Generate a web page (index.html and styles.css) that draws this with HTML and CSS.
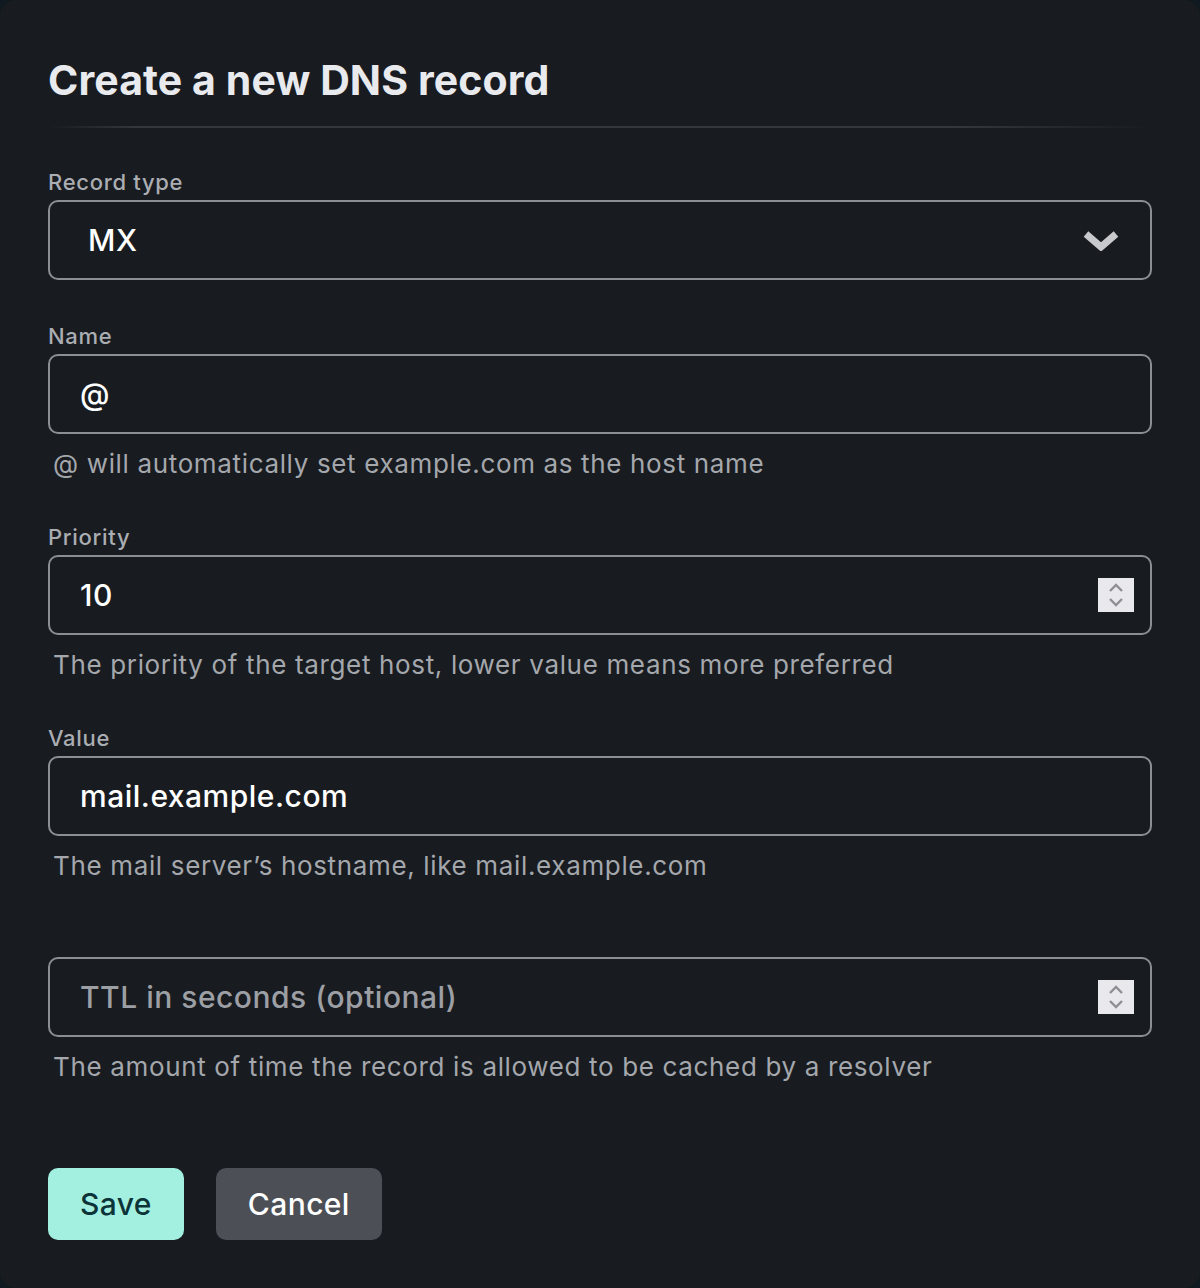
FILE: index.html
```html
<!DOCTYPE html>
<html lang="en">
<head>
    <meta charset="UTF-8">
    <meta name="viewport" content="width=device-width, initial-scale=1.0">
    <title>Create a new DNS record</title>
    <link rel="stylesheet" href="styles.css">
</head>
<body>
    <div class="modal">
        <h1>Create a new DNS record</h1>
        <div class="divider"></div>

        <form class="record-form" onsubmit="return false">
            <!-- Tipo de registro -->
            <div class="field">
                <label class="field-label" for="type">Record type</label>
                <div class="control">
                    <select id="type" class="input select">
                        <option>A</option>
                        <option>AAAA</option>
                        <option>CNAME</option>
                        <option selected>MX</option>
                        <option>TXT</option>
                    </select>
                    <svg class="chevron" width="36" height="22" viewBox="0 0 36 22">
                        <path d="M3 5 L18 18 L33 5" fill="none" stroke="#c7c9cc" stroke-width="7" stroke-linejoin="miter"/>
                    </svg>
                </div>
            </div>

            <div class="field">
                <label class="field-label" for="name">Name</label>
                <input id="name" class="input" type="text" value="@">
                <p class="help">@ will automatically set example.com as the host name</p>
            </div>

            <div class="field">
                <label class="field-label" for="priority">Priority</label>
                <div class="control">
                    <input id="priority" class="input number" type="number" value="10">
                    <span class="spinner">
                        <svg width="20" height="28" viewBox="0 0 20 28">
                            <path d="M4 10 L10 4 L16 10 M4 18 L10 24 L16 18" fill="none" stroke="#8e8e93" stroke-width="2.4"/>
                        </svg>
                    </span>
                </div>
                <p class="help">The priority of the target host, lower value means more preferred</p>
            </div>

            <div class="field">
                <label class="field-label" for="value">Value</label>
                <input id="value" class="input" type="text" value="mail.example.com">
                <p class="help">The mail server’s hostname, like mail.example.com</p>
            </div>

            <div class="field">
                <label class="field-label" for="ttl"></label>
                <div class="control">
                    <input id="ttl" class="input number" type="number" placeholder="TTL in seconds (optional)">
                    <span class="spinner">
                        <svg width="20" height="28" viewBox="0 0 20 28">
                            <path d="M4 10 L10 4 L16 10 M4 18 L10 24 L16 18" fill="none" stroke="#8e8e93" stroke-width="2.4"/>
                        </svg>
                    </span>
                </div>
                <p class="help">The amount of time the record is allowed to be cached by a resolver</p>
            </div>

            <div class="actions">
                <button type="submit" class="btn btn-save">Save</button>
                <button type="button" class="btn btn-cancel">Cancel</button>
            </div>
        </form>
    </div>
</body>
</html>
```

FILE: styles.css
```css
body {
    font-family: 'Inter', 'Noto Sans', sans-serif;
    background-color: #0e1a20;
    margin: 0;
    padding: 0;
}
.modal {
    background-color: #181b20;
    border-radius: 16px;
    min-height: 1288px;
    box-sizing: border-box;
    padding: 52px 48px 40px;
}
h1 {
    margin: 0;
    font-size: 41px;
    font-weight: 700;
    letter-spacing: 0.1px;
    line-height: 56px;
    color: #e8eaed;
}
.divider {
    height: 2px;
    margin: 18px 0 40px;
    background: linear-gradient(to right, rgba(60, 63, 68, 0) 0%, #34373c 8%, #34373c 82%, rgba(60, 63, 68, 0) 100%);
}
.field {
    display: flex;
    flex-direction: column;
    margin-bottom: 42px;
}
.field-label {
    display: block;
    height: 28px;
    line-height: 28px;
    margin-bottom: 4px;
    font-size: 22px;
    font-weight: 500;
    letter-spacing: 0.7px;
    color: #aaadb2;
}
.control {
    position: relative;
}
.input {
    box-sizing: border-box;
    width: 100%;
    height: 80px;
    padding: 0 30px;
    border: 2px solid #8b8e93;
    border-radius: 10px;
    background-color: #181b20;
    color: #ffffff;
    font-family: inherit;
    font-size: 30px;
    font-weight: 500;
    letter-spacing: 0.5px;
    outline: none;
}
.input::placeholder {
    color: #9c9fa4;
}
.select {
    appearance: none;
    -webkit-appearance: none;
    padding-left: 38px;
}
.number {
    -moz-appearance: textfield;
}
.number::-webkit-inner-spin-button,
.number::-webkit-outer-spin-button {
    -webkit-appearance: none;
    margin: 0;
}
.chevron {
    position: absolute;
    right: 33px;
    top: 29px;
    pointer-events: none;
}
.spinner {
    position: absolute;
    right: 18px;
    top: 23px;
    width: 36px;
    height: 34px;
    display: flex;
    align-items: center;
    justify-content: center;
    background-color: #e9e9ed;
}
.help {
    margin: 13px 0 0 5px;
    font-size: 26px;
    line-height: 34px;
    letter-spacing: 0.65px;
    color: #a4a7ac;
}
.actions {
    display: flex;
    gap: 32px;
    margin-top: 84px;
}
.btn {
    height: 72px;
    padding: 0 32px;
    border: none;
    border-radius: 10px;
    font-family: inherit;
    font-size: 30px;
    font-weight: 500;
    letter-spacing: 0.4px;
    cursor: pointer;
}
.btn-save {
    background-color: #a3f0e0;
    color: #0c3438;
}
.btn-cancel {
    background-color: #4c5056;
    color: #ffffff;
}
```
